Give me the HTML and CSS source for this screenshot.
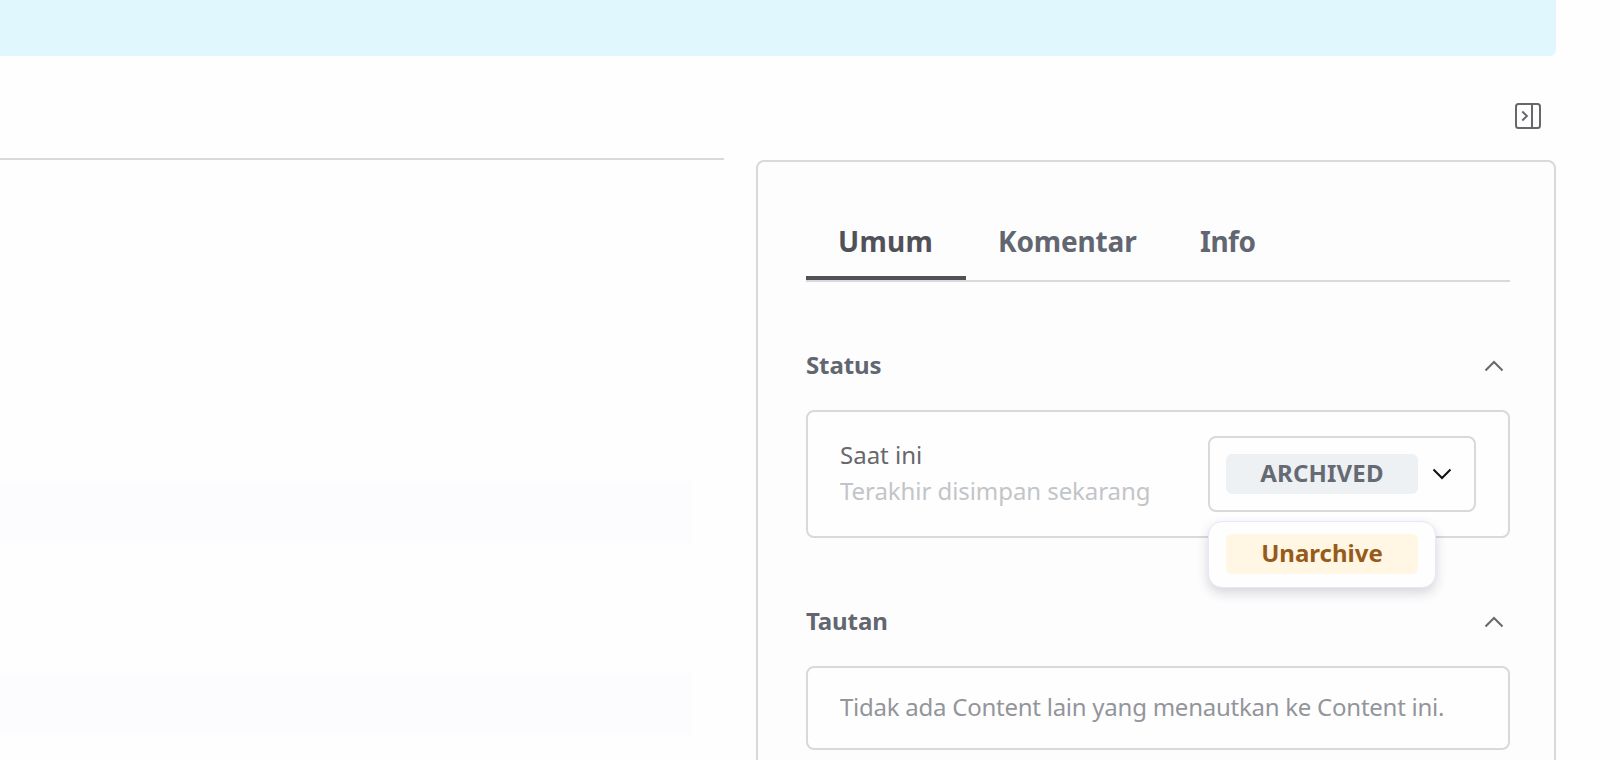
FILE: index.html
```html
<!DOCTYPE html>
<html lang="id">
<head>
<meta charset="utf-8">
<title>Content</title>
<link rel="stylesheet" href="styles.css">
</head>
<body>
<div class="page">
  <div class="banner"></div>
  <div class="toolbar">
    <button class="icon-button" aria-label="Panel">
      <svg width="26" height="26" viewBox="0 0 26 26" fill="none" stroke="currentColor" stroke-width="2"><rect x="1" y="1" width="24" height="24" rx="2.5"/><path d="M17 1v24"/><path d="M7.300 8.500l4.600 4.500-4.600 4.500"/></svg>
    </button>
  </div>
  <div class="columns">
    <main class="editor">
      <div class="field"></div>
      <div class="field"></div>
    </main>
    <aside class="panel">
      <nav class="tabs">
        <a class="tab tab-active">Umum</a>
        <a class="tab tab-comments">Komentar</a>
        <a class="tab tab-info">Info</a>
      </nav>
      <section class="section">
        <header class="section-head">
          <h2>Status</h2>
          <svg class="chevron" width="20" height="12" viewBox="0 0 20 12"><path d="M1.500 10.500L10 2l8.500 8.500"/></svg>
        </header>
        <div class="card status-card">
          <div class="status-text">
            <div class="current">Saat ini</div>
            <div class="saved">Terakhir disimpan sekarang</div>
          </div>
          <div class="select">
            <span class="badge badge-gray">ARCHIVED</span>
            <svg class="chevron chevron-down" width="20" height="12" viewBox="0 0 20 12"><path d="M1.500 1.500L10 10l8.500-8.500"/></svg>
            <div class="menu"><span class="badge badge-amber">Unarchive</span></div>
          </div>
        </div>
      </section>
      <section class="section">
        <header class="section-head">
          <h2>Tautan</h2>
          <svg class="chevron" width="20" height="12" viewBox="0 0 20 12"><path d="M1.500 10.500L10 2l8.500 8.500"/></svg>
        </header>
        <div class="card links-card">Tidak ada Content lain yang menautkan ke Content ini.</div>
      </section>
    </aside>
  </div>
</div>
</body>
</html>
```
FILE: styles.css
```css
* { box-sizing: border-box; }
body { margin: 0; background: #fefefe; font-family: "Noto Sans", sans-serif; font-size: 24px; }
.page { width: 1620px; height: 760px; overflow: hidden; padding-right: 64px; }
.banner { height: 56px; background: #e0f7fe; border-radius: 0 0 6px 0; }
.toolbar { height: 102px; display: flex; justify-content: flex-end; padding: 47px 15px 0 0; }
.icon-button { display: block; width: 26px; height: 26px; padding: 0; border: 0; background: none; color: #68686c; }
.icon-button svg { display: block; }
.columns { display: flex; gap: 32px; }
.editor { width: 724px; border-top: 2px solid #d9d9db; padding: 321px 32px 0 0; display: flex; flex-direction: column; gap: 130px; }
.field { height: 62px; background: #fcfcfe; }
.panel { width: 800px; height: 680px; margin-top: 2px; padding: 48px 44px 0 48px; border: 2px solid #d9d9db; border-radius: 8px; background: #fdfdfe; }
.tabs { display: flex; height: 72px; border-bottom: 2px solid #d9d9db; }
.tab { padding: 12px 32px 0; font-size: 28px; line-height: 38px; font-weight: 700; color: #626670; }
.tab-active { width: 160px; letter-spacing: .3px; color: #515158; border-bottom: 4px solid #515158; }
.tab-comments { width: 202px; letter-spacing: -.15px; }
.tab-info { letter-spacing: -.5px; }
.section { padding-top: 66px; }
.section-head { height: 62px; display: flex; justify-content: space-between; padding-right: 6px; }
.section-head h2 { margin: -1px 0 0; font-size: 24px; line-height: 36px; letter-spacing: -.1px; color: #626670; }
.section-head .chevron { margin-top: 12px; }
.chevron { fill: none; stroke: #68686c; stroke-width: 2; flex: none; }
.card { border: 2px solid #d9d9db; border-radius: 8px; background: #fefefe; }
.status-card { height: 128px; display: flex; justify-content: space-between; padding: 24px 32px 0; }
.status-text { padding-top: 1px; line-height: 36px; }
.current { color: #68686c; }
.saved { color: #c2c5c8; letter-spacing: -.07px; }
.select { position: relative; width: 268px; height: 76px; border: 2px solid #d9d9db; border-radius: 8px; padding: 16px; display: flex; gap: 14px; }
.badge { width: 192px; height: 40px; border-radius: 6px; font-weight: 700; line-height: 37px; text-align: center; }
.badge-gray { background: #eef1f3; color: #666a73; letter-spacing: .15px; }
.badge-amber { background: #fff6e3; color: #965b1b; }
.chevron-down { stroke: #111; margin-top: 14px; }
.menu { position: absolute; left: -2px; top: 83px; width: 228px; height: 67px; display: flex; padding: 12px 17px; background: #fefefe; border: 1px solid #e6e6fc; border-radius: 14px; box-shadow: 0 5px 12px rgba(40,40,60,.18); }
.menu .badge { flex: none; }
.links-card { height: 84px; padding: 0 32px; line-height: 77px; letter-spacing: -.25px; color: #92959b; }
```
